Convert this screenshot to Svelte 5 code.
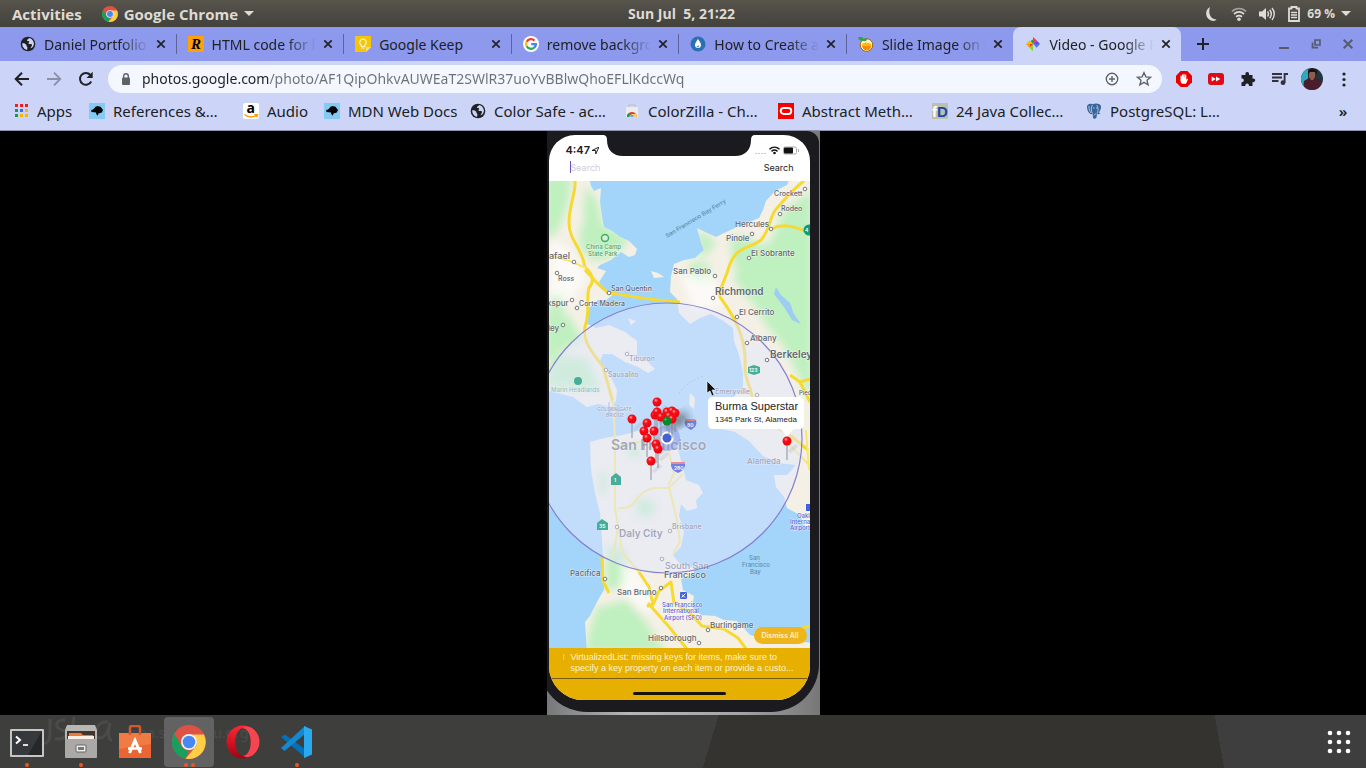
<script>
  const tabs = [
    { icon: 'globe', title: 'Daniel Portfolio' },
    { icon: 'rletter', title: 'HTML code for b' },
    { icon: 'keep', title: 'Google Keep' },
    { icon: 'google', title: 'remove backgro' },
    { icon: 'drop', title: 'How to Create a' },
    { icon: 'orange', title: 'Slide Image on H' },
    { icon: 'photos', title: 'Video - Google P', active: true }
  ];
  const bookmarks = [
    { icon: 'apps', title: 'Apps', w: 76 },
    { icon: 'mdn', title: 'References &…', w: 154 },
    { icon: 'amazon', title: 'Audio', w: 81 },
    { icon: 'mdn', title: 'MDN Web Docs', w: 146 },
    { icon: 'globe', title: 'Color Safe - ac…', w: 154 },
    { icon: 'store', title: 'ColorZilla - Ch…', w: 154 },
    { icon: 'oracle', title: 'Abstract Meth…', w: 154 },
    { icon: 'fd', title: '24 Java Collec…', w: 154 },
    { icon: 'pg', title: 'PostgreSQL: L…', w: 150 }
  ];
  const extensions = [
    ['adblock', 'Ad blocker'], ['ff', 'Video speed'], ['puzzle', 'Extensions'],
    ['playlist', 'Media control'], ['avatar', 'Profile'], ['dots', 'Menu']
  ];
  const dock = [
    { icon: 'terminal', label: 'Terminal', runs: 1 },
    { icon: 'files', label: 'Files', runs: 1 },
    { icon: 'software', label: 'Software', runs: 0 },
    { icon: 'chrome', label: 'Chrome', runs: 2, active: true },
    { icon: 'opera', label: 'Opera', runs: 0 },
    { icon: 'vscode', label: 'Code', runs: 1 }
  ];
  let url = $state('photos.google.com/photo/AF1QipOhkvAUWEaT2SWlR37uoYvBBlwQhoEFLlKdccWq');

  const insideTowns = [
    [629, 361, 'Tiburon', 7], [608, 377, 'Sausalito', 7], [551, 392, 'Marin Headlands', 6, 'g'],
    [715, 394, 'Emeryville', 7], [611, 450, 'San Francisco', 14, 'b'], [747, 464, 'Alameda', 8],
    [619, 537, 'Daly City', 10, 'b'], [672, 529, 'Brisbane', 7], [665, 569, 'South San', 9], [597, 411, 'GOLDEN GATE', 5], [606, 417, 'BRIDGE', 5]
  ];
  const towns = [
    [774, 196, 'Crockett', 7], [781, 211, 'Rodeo', 7], [735, 227, 'Hercules', 8], [726, 241, 'Pinole', 8],
    [751, 256, 'El Sobrante', 8], [673, 274, 'San Pablo', 8], [715, 295, 'Richmond', 10, 'b'], [739, 315, 'El Cerrito', 8],
    [750, 341, 'Albany', 8], [770, 358, 'Berkeley', 10, 'b'], [549, 259, 'afael', 9], [558, 281, 'Ross', 7],
    [611, 291, 'San Quentin', 7], [579, 306, 'Corte Madera', 7], [547, 306, 'kspur', 8], [548, 331, 'ley', 8],
    [586, 249, 'China Camp', 6, 'g'], [588, 256, 'State Park', 6, 'g'], [799, 395, 'Pied', 6],
    [570, 576, 'Pacifica', 8], [664, 578, 'Francisco', 9], [617, 595, 'San Bruno', 8], [648, 641, 'Hillsborough', 8],
    [710, 628, 'Burlingame', 8], [662, 607, 'San Francisco', 6, 'p'], [663, 613, 'International', 6, 'p'],
    [664, 620, 'Airport (SFO)', 6, 'p'], [749, 560, 'San', 6, 't'], [742, 567, 'Francisco', 6, 't'], [750, 574, 'Bay', 6, 't'],
    [797, 518, 'Oakl', 6, 'p'], [790, 524, 'Internat', 6, 'p'], [790, 530, 'Airport', 6, 'p']
  ];
  const insideDots = [[627, 354], [606, 370], [757, 395], [617, 527], [670, 531], [662, 559]];
  const dots = [
    [805, 189], [780, 214], [771, 229], [752, 234], [749, 258], [715, 276], [713, 298], [737, 317], [747, 343], [767, 360],
    [574, 262], [557, 273], [609, 293], [572, 300], [577, 308], [563, 325], [605, 579], [661, 588], [699, 643], [708, 630]
  ];
  const pins = [
    [657, 402], [632, 419], [655, 415], [657, 412], [667, 412], [672, 411], [675, 413], [661, 417],
    [669, 416], [672, 419], [647, 423], [644, 431], [654, 431], [647, 438], [656, 444], [658, 449], [651, 461], [787, 441]
  ];
</script>

{#snippet icon(name)}
  {#if name === 'globe'}
    <svg viewBox="0 0 16 16"><circle cx="8" cy="8" r="7.3" fill="#202124" /><path d="M2.200 7.200c1.500-.2 2.900.2 3.800 1.200.7.8.2 1.700 1.100 2.300.6.500.2 1.700-.1 3.200-2.800-.6-5-3.400-4.800-6.700zM9 1.900c-.1 1.200-1.300 1.100-1.900 1.900-.5.8.2 1.300 1.200 1.300 1.100 0 1.200 1 .4 1.700-.9.7.3 1.500 1.500 1.200 1.200-.4 2 .3 1.800 1.400-.2.900-1.300 1.300-1.300 2.900 2.400-1 3.600-3.200 3.100-5.600C13.200 4.100 11.400 2.400 9 1.900z" fill="#ccd5f8" /></svg>
  {:else if name === 'rletter'}
    <svg viewBox="0 0 16 16"><rect width="16" height="16" fill="#ff9f0c" /><text x="3" y="13" font-family="Liberation Serif" font-size="15" font-weight="bold" font-style="italic">R</text></svg>
  {:else if name === 'keep'}
    <svg viewBox="0 0 16 16"><path d="M0 0h16v11l-5 5H0z" fill="#f5c50a" /><path d="M16 11h-5v5z" fill="#ffe168" /><path d="M6.300 10.500V9.300a3.300 3.300 0 1 1 3.400 0v1.200zM6.500 12h3" fill="none" stroke="#fff6cf" stroke-width="1.200" /></svg>
  {:else if name === 'google'}
    <svg viewBox="0 0 16 16"><circle cx="8" cy="8" r="8" fill="#fff" /><g fill="none" stroke-width="2.300"><path d="M11.500 4.600A4.900 4.900 0 0 0 3.700 5.800" stroke="#ea4335" /><path d="M3.700 5.700a4.900 4.900 0 0 0 0 4.600" stroke="#fbbc05" /><path d="M3.700 10.200a4.900 4.900 0 0 0 7.500 1.400" stroke="#34a853" /><path d="M11.200 11.600a4.900 4.900 0 0 0 1.700-3.500H8.200" stroke="#4285f4" /></g></svg>
  {:else if name === 'drop'}
    <svg viewBox="0 0 16 16"><circle cx="8" cy="8" r="7.500" fill="#2c70b4" /><path d="M8 3c1.700 2.600 3 4.200 3 6a3 3 0 0 1-6 0c0-1.800 1.300-3.400 3-6z" fill="#fff" /><path d="M8.600 9.500a1.300 1.300 0 0 1-1.800 1.200" stroke="#2c70b4" fill="none" /></svg>
  {:else if name === 'orange'}
    <svg viewBox="0 0 16 16"><circle cx="8.500" cy="9" r="6.300" fill="#fff0c4" stroke="#a06718" /><path d="M4 8q4-3 9 0 1 6-4.500 6.500Q4 14 4 8z" fill="#ffb512" /><path d="M4.300 10h8.500q-.6 3.800-4.300 4.300Q5 13.800 4.300 10z" fill="#f68c00" /><path d="M0 1l4 0 2 2 4-1-2 3H5L1 4z" fill="#2fa440" /></svg>
  {:else if name === 'photos'}
    <svg viewBox="0 0 16 16"><path d="M8 8V1l3.600 3.200z" fill="#f04231" /><path d="M8 8l3.600-3.800L15 8z" fill="#8240e8" /><path d="M8 8h7l-3.500 3.800z" fill="#4778ec" /><path d="M8 8v7l-3.600-3.300z" fill="#7adb2b" /><path d="M8 8l3.500 3.800L8 12z" fill="#ccd5f8" /><path d="M8 8H1l3.500-3.700z" fill="#fbbc04" /><path d="M8 8l-3.600 3.700L1 8z" fill="#fb9d0a" /><path d="M8 8H5v3z" fill="#e5331f" /><path d="M8 8V3.500L5.500 5z" fill="#249b45" /></svg>
  {:else if name === 'apps'}
    <svg viewBox="0 0 16 16"><path d="M2 1h3v3H2z M7 1h3v3H7z M12 1h3v3h-3z" fill="#f01d19" /><path d="M2 6h3v3H2z M2 11h3v3H2z" fill="#159b51" /><path d="M7 6h3v3H7z" fill="#4169ee" /><path d="M12 6h3v3h-3z M7 11h3v3H7z M12 11h3v3h-3z" fill="#f7b500" /></svg>
  {:else if name === 'mdn'}
    <svg viewBox="0 0 16 16"><rect width="16" height="16" fill="#83cbf4" /><path d="M2 7.500l3-1.700 1.500-2 2-.8 3 .8L14 7l-1.200 2.500-3.300 1-.8 2.300-1.500-1.800-.2-1.500L2.500 9z" fill="#050505" /></svg>
  {:else if name === 'amazon'}
    <svg viewBox="0 0 16 16"><rect width="16" height="16" rx="2" fill="#fff" /><text x="3.500" y="10" font-family="Open Sans" font-size="14" font-weight="bold">a</text><path d="M1.500 11.500c3.800 3 8.500 3 12.500.4M11.500 11.700h2.800l-.7 2.300" stroke="#ff9900" stroke-width="1.500" fill="none" /></svg>
  {:else if name === 'store'}
    <svg viewBox="0 0 16 16"><path d="M5 4V2h6v2" stroke="#c8c8c8" stroke-width="1.500" fill="none" /><path d="M2 4h12v10H2z" fill="#ececec" /><path d="M3 14a5 5 0 0 1 10 0z" fill="#db4437" /><path d="M3 14c0-2 .7-3 1.500-3.700L8 14z" fill="#0f9d58" /><path d="M13 14a5 5 0 0 0-1-3H8v3z" fill="#ffcd40" /><path d="M5.700 14a2.300 2.300 0 0 1 4.600 0z" fill="#4285f4" stroke="#fff" stroke-width=".5" /></svg>
  {:else if name === 'oracle'}
    <svg viewBox="0 0 16 16"><rect width="16" height="16" fill="#f80000" /><rect x="2.700" y="5" width="10.600" height="6" rx="3" fill="none" stroke="#fff" stroke-width="1.900" /></svg>
  {:else if name === 'fd'}
    <svg viewBox="0 0 16 16"><rect width="16" height="16" fill="#bcc0ae" /><text x="0" y="13.500" font-family="Liberation Sans" font-size="15" font-weight="bold" fill="#fff">f</text><text x="5" y="13.500" font-family="Liberation Sans" font-size="15" font-weight="bold" fill="#2148a8">D</text></svg>
  {:else if name === 'pg'}
    <svg viewBox="0 0 16 16"><path d="M1 3.500C1.500.8 4.500.3 6.500 1.300 9 .2 14.500 0 15 3.500c.3 2.500-1.200 5-2.300 6.200l2 .4-1.800 1.200-2-.2c-.2 2.400.1 4.400-2.400 4.600C6.500 16 7 13 6.700 11l-1.700.2C2.500 10.500.8 6.500 1 3.500z" fill="#39659b" /><path d="M6.500 2C4.800 4 5 8 6.500 10.500M10.700 2.200c1.800 2.200 1.700 5.500.4 8.300M3 3c-.2 3 .6 5 2 7M7 5h1.500M10 5h1.500M8 12.500c.5-1.200 1-1.500 2.200-1.700" fill="none" stroke="#dbe6f7" stroke-width=".7" /></svg>
  {:else if name === 'back'}
    <svg viewBox="0 0 16 16"><path d="M15 8H2M8 1.700L1.700 8 8 14.300" fill="none" stroke="#202124" stroke-width="2" /></svg>
  {:else if name === 'forward'}
    <svg viewBox="0 0 16 16"><path d="M1 8h13M8 1.700L14.300 8 8 14.300" fill="none" stroke="#8b90a8" stroke-width="1.800" /></svg>
  {:else if name === 'reload'}
    <svg viewBox="0 0 16 16"><path d="M13.200 10.500A5.900 5.900 0 1 1 12.400 4" fill="none" stroke="#202124" stroke-width="2" /><path d="M14.700.8v6.200H8.500z" fill="#202124" /></svg>
  {:else if name === 'adblock'}
    <svg viewBox="0 0 16 16"><path d="M4.700 0h6.600L16 4.700v6.600L11.300 16H4.700L0 11.300V4.700z" fill="#e80000" /><path d="M4.500 9V5c0-.8 1-.8 1.100 0v2.600L6 3.700c.1-.7 1-.7 1.100 0v3.500l.4-4c.1-.7 1-.7 1.100 0l.1 4 .5-3.300c.2-.7 1-.6 1.100 0v5l.6-.9c.6-.6 1.300-.2 1 .5L10 12.700H6.200C5 12.200 4.500 10.700 4.500 9z" fill="#fff" /></svg>
  {:else if name === 'ff'}
    <svg viewBox="0 0 16 16"><rect y="2" width="16" height="12" rx="3" fill="#de0b17" /><path d="M3.700 5.500L7.800 8l-4.100 2.500zM8 5.500L12.300 8 8 10.500z" fill="#fff" /></svg>
  {:else if name === 'puzzle'}
    <svg viewBox="0 0 16 16"><path d="M1.500 4h4c-.4-1.700.3-3 1.700-3S9.400 2.300 9 4h3.500v3.500c1.500-.3 2.700.5 2.700 1.800s-1.200 2.100-2.700 1.800V15H9c.1-1.500-.7-2.400-1.900-2.400S5.200 13.500 5.300 15H1.500v-3.800c1.500.1 2.300-.7 2.300-1.900S3 7.400 1.500 7.500z" fill="#202124" /></svg>
  {:else if name === 'playlist'}
    <svg viewBox="0 0 16 16"><path d="M0 3h10M0 6.500h10M0 10h6.500" stroke="#30313a" stroke-width="1.800" /><path d="M16 3h-3.400v8.500" fill="none" stroke="#30313a" stroke-width="1.900" /><circle cx="11" cy="11.700" r="2.400" fill="#30313a" /></svg>
  {:else if name === 'avatar'}
    <svg class="avatar" viewBox="0 0 22 22"><defs><clipPath id="face"><circle cx="11" cy="11" r="11" /></clipPath></defs><g clip-path="url(#face)"><rect width="22" height="22" fill="#20353c" /><path d="M0 0h7v22H0z" fill="#32a8bd" /><path d="M2 22l1-9 5-3h7l5 4 1 8z" fill="#4b1d2b" /><path d="M8 4h6v5l-2 3h-2l-2-3z" fill="#8d5e4d" /><path d="M7 7V3l4-3 5 2v5l-2-3H9z" fill="#151417" /></g></svg>
  {:else if name === 'dots'}
    <svg viewBox="0 0 16 16"><circle cx="8" cy="3" r="1.600" fill="#202124" /><circle cx="8" cy="8.500" r="1.600" fill="#202124" /><circle cx="8" cy="14" r="1.600" fill="#202124" /></svg>
  {:else if name === 'chrome'}
    <svg viewBox="0 0 34 34"><circle cx="17" cy="17" r="17" fill="#de5145" /><path d="M2.300 8.500L9.600 21.300A8.500 8.500 0 0 0 17 25.500l-3.500 8.200A17 17 0 0 1 2.300 8.500z" fill="#17a05d" /><path d="M32 9.500a17 17 0 0 1-15 24.500l-3.500-.3L24.200 21c1.500-4 0-9-4-11.500z" fill="#ffce44" /><circle cx="17" cy="17" r="8" fill="#f3f3f3" /><circle cx="17" cy="17" r="6.300" fill="#4788f4" /></svg>
  {:else if name === 'terminal'}
    <svg viewBox="0 0 34 34"><rect x="0" y="4" width="34" height="28" rx="1" fill="#c4c5c4" /><rect x="2" y="6" width="30" height="24" fill="#252728" /><path d="M2 6h30L18 30H2z" fill="#45484a" opacity=".55" /><path d="M6 11.500l4 3.500-4 3.500" fill="none" stroke="#fff" stroke-width="2" /><path d="M13 20h5" stroke="#fff" stroke-width="1.700" /></svg>
  {:else if name === 'files'}
    <svg viewBox="0 0 34 34"><path d="M3 0h28l2 5v26c0 2-1 2-2 2H3c-1 0-2 0-2-2V5z" fill="#b7b7b6" /><path d="M3 6h28v8H3z" fill="#42352b" /><path d="M5 8h12l2 2h10v5H5z" fill="#ed7b37" /><path d="M4 11h26v3H4z" fill="#f8eee5" /><path d="M1 14h32v17c0 2-1 2-2 2H3c-2 0-2-1-2-2z" fill="#aaa9a7" /><rect x="12" y="20" width="10" height="7" rx="1" fill="#eee" stroke="#656461" /><rect x="14" y="22" width="6" height="3" fill="#777" /></svg>
  {:else if name === 'software'}
    <svg viewBox="0 0 34 34"><path d="M1 8h32v25H1z" fill="#eb6534" /><path d="M1 8h32v11L1 24z" fill="#f17b45" /><path d="M12 10V3q0-2 2-2h6q2 0 2 2v7" fill="none" stroke="#d7572c" stroke-width="2.500" /><path d="M11.500 28L17 15.500 22.500 28" fill="none" stroke="#fff" stroke-width="3" /><path d="M10 23.500h14" stroke="#fff" stroke-width="2.500" /></svg>
  {:else if name === 'opera'}
    <svg viewBox="0 0 34 34"><defs><linearGradient id="op" x2="0" y2="1"><stop stop-color="#ff2638" /><stop offset="1" stop-color="#a8000d" /></linearGradient></defs><path fill-rule="evenodd" d="M17 .5a16.500 16.500 0 1 1 0 33 16.500 16.500 0 0 1 0-33zM17 3.200c-4.500 0-7.800 6-7.800 13.800S12.500 30.800 17 30.800 24.800 25 24.800 17 21.500 3.200 17 3.200z" fill="url(#op)" /><path d="M17 3.200c3-2.200 7-1.600 10.500 1A16.500 16.500 0 0 1 27 30c-3.300 2.400-7 3-10 .8 4.500 0 7.800-6 7.800-13.800S21.500 3.200 17 3.200z" fill="#f24750" /></svg>
  {:else if name === 'vscode'}
    <svg viewBox="0 0 34 34"><path d="M1 12l4-2.500L26 25v8z" fill="#0072bd" /><path d="M1 23l3.500 3L25 9V1z" fill="#1588cf" /><path d="M24 1l8 3.500v25L24 33z" fill="#2aa9ee" /></svg>
  {/if}
{/snippet}

{#snippet labels(list)}
  {#each list as [x, y, text, size, kind]}
    <text {x} {y} font-size={size} class="lbl {kind ?? ''}">{text}</text>
  {/each}
{/snippet}

<div class="desktop">
  <header class="topbar">
    <div class="side">
      <button class="plain">Activities</button>
      <button class="plain app"><span class="i16">{@render icon('chrome')}</span>Google Chrome<i class="caret"></i></button>
    </div>
    <time>Sun Jul&nbsp; 5, 21∶22</time>
    <div class="side status">
      <svg width="16" height="16" viewBox="0 0 16 16"><path d="M7 1C1 4 2 14 10 15c2 0 3-.8 3.500-1.500C7 13 5 7 7 1z" fill="#dedcd8" /></svg>
      <svg width="16" height="16" viewBox="0 0 16 16" fill="none" stroke-width="1.700"><path d="M1 5.500c4-4 10-4 14 0" stroke="#a3a19b" /><path d="M3 8c3-2.500 7-2.500 10 0M5 10.700c2-1.500 4-1.500 6 0" stroke="#dedcd8" /><circle cx="8" cy="13.300" r="1.800" fill="#dedcd8" /></svg>
      <svg width="16" height="16" viewBox="0 0 16 16"><path d="M0 5.500h3L7 2v12l-4-3.500H0z" fill="#dedcd8" /><path d="M8.500 5.500c1.200 1.500 1.200 3.500 0 5M10.700 3.800c2 2.600 2 5.800 0 8.400M13 2c3 3.500 3 8.500 0 12" fill="none" stroke="#dedcd8" stroke-width="1.400" /></svg>
      <svg width="14" height="16" viewBox="0 0 14 16"><path d="M2 2.500h2.500V1h5v1.500H12V15H2z" fill="none" stroke="#dedcd8" stroke-width="1.800" /><path d="M4 6.500h6M4 9h6M4 11.500h6" stroke="#dedcd8" stroke-width="1.300" /></svg>
      <span class="pct">69 %</span><i class="caret"></i>
    </div>
  </header>

  <nav class="tabstrip" aria-label="Tabs">
    <div class="tabs">
      {#each tabs as tab}
        <div class="tab" class:active={tab.active}>
          <span class="i16">{@render icon(tab.icon)}</span>
          <span class="title">{tab.title}</span>
          <button class="close" aria-label="Close tab"><svg width="10" height="10" viewBox="0 0 10 10"><path d="M1.300 1.300l7.400 7.400M8.700 1.300L1.300 8.700" stroke="#202124" stroke-width="1.700" /></svg></button>
        </div>
      {/each}
    </div>
    <button class="close new" aria-label="New tab"><svg width="12" height="12" viewBox="0 0 12 12"><path d="M6 0v12M0 6h12" stroke="#202124" stroke-width="2" /></svg></button>
    <div class="wins">
      <button class="close" aria-label="Minimise"><svg width="10" height="10" viewBox="0 0 10 10"><path d="M0 9h10" stroke="#575b6b" stroke-width="2" /></svg></button>
      <button class="close" aria-label="Restore"><svg width="10" height="10" viewBox="0 0 10 10"><path d="M4 1h5v5H4zM1.500 3.500v5.200H7" fill="none" stroke="#575b6b" stroke-width="1.700" /></svg></button>
      <button class="close" aria-label="Close window"><svg width="10" height="10" viewBox="0 0 10 10"><path d="M.7.7l8.600 8.600M9.300.7L.7 9.300" stroke="#575b6b" stroke-width="2" /></svg></button>
    </div>
  </nav>

  <div class="toolbar">
    <button class="tool" aria-label="Back">{@render icon('back')}</button>
    <button class="tool" aria-label="Forward">{@render icon('forward')}</button>
    <button class="tool" aria-label="Reload">{@render icon('reload')}</button>
    <div class="omnibox">
      <svg width="10" height="12" viewBox="0 0 10 12"><rect x="1" y="4.500" width="8" height="7.500" rx="1" fill="#5f6368" /><path d="M2.700 5V3a2.300 2.300 0 0 1 4.600 0v2" fill="none" stroke="#5f6368" stroke-width="1.400" /></svg>
      <input aria-label="Address" bind:value={url} spellcheck="false" />
      <button class="tool" aria-label="Zoom"><svg viewBox="0 0 16 16" fill="none" stroke="#5f6368" stroke-width="1.400"><circle cx="8" cy="8" r="5.700" /><path d="M8 5v6M5 8h6" /></svg></button>
      <button class="tool" aria-label="Bookmark"><svg viewBox="0 0 16 16"><path d="M8 1.700l1.900 4.200 4.600.4-3.500 3 1.100 4.500L8 11.400l-4.100 2.400L5 9.300l-3.500-3 4.600-.4z" fill="none" stroke="#5f6368" stroke-width="1.400" /></svg></button>
    </div>
    {#each extensions as [name, label]}
      <button class="tool" aria-label={label}>{@render icon(name)}</button>
    {/each}
  </div>

  <nav class="bookmarks" aria-label="Bookmarks">
    {#each bookmarks as b}
      <a href="#{b.icon}" style:width="{b.w}px"><span class="i16">{@render icon(b.icon)}</span>{b.title}</a>
    {/each}
    <button class="more" aria-label="More bookmarks">»</button>
  </nav>

  <main class="stage">
    <div class="frame">
      <div class="bezel">
        <div class="screen">
          <div class="phonestatus">
            <strong>4:47</strong>
            <svg width="7" height="7" viewBox="0 0 7 7"><path d="M0 3.500L7 0 3.700 7V3.500z" fill="none" stroke="#222" /></svg>
            <svg class="notch" width="152" height="21" viewBox="0 0 152 21"><path d="M0 0q4 0 4 5c0 10 6 16 16 16h112c10 0 16-6 16-16q0-5 4-5z" fill="#1b1a1e" /></svg>
            <svg class="signals" width="44" height="9" viewBox="0 0 44 9"><path d="M0 7.500h11" stroke="#ccc" stroke-dasharray="2 1" /><path d="M14.500 3.300c3-2.700 7-2.700 10 0M16.500 5.300c2-1.600 4-1.600 6 0" fill="none" stroke="#111" stroke-width="1.500" /><circle cx="19.500" cy="7" r="1.300" fill="#111" /><rect x="28.500" y="1" width="13" height="7" rx="1.500" fill="none" stroke="#aaa" /><rect x="29" y="1.500" width="9" height="6" rx="1" fill="#111" /><path d="M43.500 3v3" stroke="#aaa" /></svg>
          </div>
          <div class="searchrow">
            <input aria-label="Search places" placeholder="Search" />
            <button>Search</button>
          </div>
          <div class="mapbox">
            <svg class="map" viewBox="549 181 261 467" role="img" aria-label="Map of the San Francisco Bay Area">
              <defs>
                <filter id="soft" x="-20%" y="-20%" width="140%" height="140%"><feGaussianBlur stdDeviation="4" /></filter>
                <filter id="edge"><feGaussianBlur stdDeviation=".5" /></filter>
                <radialGradient id="pin" cx=".38" cy=".32" r=".7"><stop stop-color="#ffb5b9" /><stop offset=".3" stop-color="#fb1018" /><stop offset="1" stop-color="#e80010" /></radialGradient>
                <clipPath id="land"><path id="coast" d="M545 178L589 178 591 186 594 191 601 188 600 202 602 217 604 227 612 231 620 237 629 241 637 249 635 255 629 257 621 252 611 260 600 265 597 268 606 271 599 282 603 289 614 294 606 300 598 300 589 308 585 323 596 328 609 325 625 332 637 341 637 356 648 362 655 369 648 373 638 367 625 362 612 354 603 354 600 361 606 370 612 379 617 390 616 401 611 407 598 404 587 407 573 397 558 393 545 390z M590 442L605 438 623 435 638 431 653 429 668 431 676 441 680 457 683 467 686 480 699 485 703 493 696 500 697 508 687 511 681 504 679 516 684 532 681 547 673 555 680 564 695 568 693 575 681 579 683 590 694 596 692 607 701 615 715 616 724 620 737 621 750 635 765 639 815 643 815 652 587 652 586 637 585 622 590 616 598 600 604 590 604 568 602 540 600 513 595 493 591 470z M790 178L787 185 775 191 766 201 763 210 759 218 747 223 737 227 724 233 716 237 705 232 697 228 701 242 704 250 695 258 684 260 674 264 671 276 670 292 677 299 679 313 686 320 690 324 700 318 711 314 722 320 733 328 734 341 739 355 743 372 743 388 730 400 714 412 714 427 735 432 749 441 763 456 778 463 796 465 787 475 774 475 776 487 784 497 787 508 800 515 804 525 815 530 815 178z M651 271l7 2 6 4-10 1z M690 393l5 5-1 11-5-4z M628 318l8 3-5 4z" /></clipPath>
              </defs>
              <rect x="549" y="181" width="261" height="467" fill="#a3d5fa" />
              <use href="#coast" fill="#f5f0e6" filter="url(#edge)" />
              <g clip-path="url(#land)">
                <g fill="#bff0bf" filter="url(#soft)">
                  <path d="M545 175h27l-4 30-10 26-13 10zM585 185l12 15 6 30-20 1zM580 228l22-5 28 17-18 18-19 3-13-13z" />
                  <path d="M545 308l24 8 14 24-38 20zM552 355l35 3 14 32-56-2zM555 291l10 2-3 24-11-6z" />
                  <path d="M607 545l18 3 2 35-22 8zM596 608l30-8 20 22 20 30h-82z" />
                  <path d="M812 190v215l-16-34-14-27-17-20-17-31-15-14 11-24 27-14 13-31zM697 228l20 15-17 18z" />
                  <path d="M730 235l26 5 5 18-28 10zM733 274l35 4 12 38-35-19zM690 262l20 2-3 20-18-6zM628 445l14 1-3 12-12-2zM636 498l20 4-4 16-15-2zM600 470l8 5-2 20-8-3z" />
                </g>
                <path d="M776 287l5 8 9 8 4 11 7 10-9-4-8-13-10-13z" fill="#9dcef2" />
                <g fill="#fff" opacity=".65" filter="url(#soft)"><path d="M550 240l18 8 19 28-18 30-20-11zM680 274l30-3 15 33-31 9zM620 560l20 15 20 28-15 9-24-22z" /></g>
              </g>
              <g fill="none" stroke-linejoin="round" filter="url(#edge)">
                <g stroke="#f6da30" stroke-width="3">
                  <path d="M575 181c1 12-6 24-6 42 0 17 13 25 16 44 9 8 9 15 4 21-3 10 1 20-3 35-6 17 7 30 17 44l10 35" />
                  <path d="M585 270l14 15 9 8c16 1 35 7 72 9M804 181c-10 7-18 17-27 27-8 8-6 21-16 32-13 10-26 5-33 30-5 15-9 19-8 27 11 15 27 38 25 70 0 15 8 23 7 32M771 229c12-6 23-3 38 4" />
                  <path d="M602 558l1 23 6 12M639 572l10 15 4 17-5 2 5-1 6-14 12-9 3 21 14 8 14 15 22 3 14 9 18 24M648 603l22 25 17 21M783 640c2-9 12-10 27-14M747 412l28 14 16 10 17 14M790 375l10 7 10-3M800 382l10 20" />
                </g>
                <g stroke="#f4e96e" stroke-width="2">
                  <path d="M613 400l2 37v70l3 20-5 30M615 447l42-9 10 10M618 508c23 2 15-19 39-20h12l14-14M669 487l8 33 3 22-7 12M668 448l6 25-6 13M619 527l3 25 17 20M545 254l25 7 16 7M785 440l24 25M806 430l3 40" />
                </g>
                <path d="M666 236l58-35" stroke="#70a8cd" stroke-dasharray="1 2" />
                <path d="M679 394c5-9 15-15 25-18" stroke="#7ba9cd" stroke-dasharray="2 2" />
              </g>
              {@render labels(insideTowns)}
              <g fill="#fff" stroke="#777">{#each insideDots as [x, y]}<circle cx={x} cy={y} r="1.800" />{/each}</g>
              <path d="M609 402v12M618 405v7M608 410h14" stroke="#919daf" />
              <circle cx="667" cy="438" r="135" fill="#e1e6fd" fill-opacity=".5" stroke="#8580cc" stroke-width="1.200" />
              <g fill="#46ae98"><circle cx="578" cy="381" r="4" /><path d="M748 367l6-2 6 2v6l-6 2-6-2zM611 477l5-4 5 4v8h-10zM597 523l5-4 6 4v7h-11z" /></g>
              <g fill="#7182de"><path d="M685 420h11q2 6-5 10-8-4-6-10zM671 463h14q1 7-7 10-8-3-7-10z" /><path d="M685 419h10v2h-10zM671 462h14v2h-14z" fill="#e88c96" /></g>
              <text x="674" y="470" class="shield">280</text><text x="687" y="427" class="shield">80</text><text x="749" y="372" class="shield">123</text><text x="614" y="482" class="shield">1</text><text x="599" y="528" class="shield">35</text>
              {@render labels(towns)}
              <text class="lbl t" font-size="6" transform="translate(667 238) rotate(-31)">San Francisco Bay Ferry</text>
              <g fill="#fff" stroke="#777">{#each dots as [x, y]}<circle cx={x} cy={y} r="1.800" />{/each}</g>
              <circle cx="605" cy="238" r="3.500" fill="#d3f2d5" stroke="#48ab66" stroke-width="1.500" />
              <circle cx="809" cy="230" r="5.500" fill="#119c78" /><text x="805" y="232" class="shield">4</text>
              <rect x="680" y="592" width="7" height="7" rx="1" fill="#4360df" /><path d="M681.500 597.500l4-4M682 594.500l3 3" stroke="#fff" /><rect x="806" y="504" width="6" height="7" fill="#4360df" />
              <ellipse cx="678" cy="420" rx="12" ry="7" fill="#354142" opacity=".5" filter="url(#soft)" transform="rotate(-25 678 420)" />
              <circle cx="667" cy="438" r="13" fill="#778ae5" opacity=".45" /><circle cx="667" cy="438" r="5.500" fill="#4360d5" stroke="#fff" stroke-width="2" />
              <g>{#each pins as [x, y]}<path d="M{x} {y + 4}v15" stroke="#8b8f94" /><path d="M{x + 2} {y + 11}l8-7" stroke="#777f83" stroke-width="4" opacity=".13" />{/each}</g>
              {#each pins as [x, y]}<circle cx={x} cy={y} r="4.500" fill="url(#pin)" />{/each}
              <circle cx="667" cy="421" r="4.500" fill="#06882b" /><circle cx="665.500" cy="419.500" r="1" fill="#6bbf77" />
              <path d="M713 397h86q5 0 5 5v22q0 5-5 5h-4c-4 0-5 7-8 7s-4-7-8-7h-66q-5 0-5-5v-22q0-5 5-5z" fill="#fff" />
              <text x="715" y="410" class="ctitle">Burma Superstar</text><text x="715" y="422" class="caddr">1345 Park St, Alameda</text>
              <path d="M707 381v12l3-2 2 5 2-1-2-5h4z" fill="#111" stroke="#fff" stroke-width=".6" />
            </svg>
            <button class="dismiss">Dismiss All</button>
          </div>
          <div class="warning"><span class="warn">!</span><p>VirtualizedList: missing keys for items, make sure to<br />specify a key property on each item or provide a custo...</p></div>
          <div class="home"><i></i></div>
        </div>
      </div>
    </div>
  </main>

  <footer class="dock">
    <div class="watermark">
      <svg width="76" height="34" viewBox="0 0 76 34"><path d="M8 4v16q-1 10-8 8M23 5c-10 0-11 8-3 10 8 3 3 10-7 9M32 2l-3 23c5-14 13-14 11 0M66 7c-12-2-17 16-8 16 7 0 10-15 10-15-2 8-2 16 2 18" fill="none" stroke="currentColor" stroke-width="3" /></svg>
      <span>isha.sadhguru.org</span>
    </div>
    {#each dock as d}
      <button class="dockitem" class:current={d.active} aria-label={d.label}>
        {@render icon(d.icon)}
        <span class="runs">{#each Array(d.runs) as _}<i></i>{/each}</span>
      </button>
    {/each}
    <button class="grid" aria-label="Show applications"><svg width="24" height="24" viewBox="0 0 24 24" fill="#fff">{#each [3, 12, 21] as y}{#each [3, 12, 21] as x}<circle cx={x} cy={y} r="2.300" />{/each}{/each}</svg></button>
  </footer>
</div>

<style>
  :global(body) { margin: 0; background: #000; }
  * { box-sizing: border-box; }
  .desktop { min-height: 100vh; display: flex; flex-direction: column; font-family: "Noto Sans", "Open Sans", sans-serif; font-size: 14px; color: #202124; overflow: hidden; }
  button { border: 0; padding: 0; margin: 0; background: none; font: inherit; color: inherit; display: flex; align-items: center; justify-content: center; }
  svg { display: block; flex: none; }
  .i16 { width: 16px; height: 16px; flex: none; }
  .i16 :global(svg) { width: 16px; height: 16px; }

  .topbar { height: 27px; display: flex; align-items: center; background: linear-gradient(#57544c, #42413c); color: #dfdbd2; font-weight: 700; font-family: "Open Sans", sans-serif; }
  .side { flex: 1; display: flex; align-items: center; gap: 20px; padding: 0 12px; }
  .app { gap: 6px; }
  .plain { font-size: 15px; white-space: nowrap; }
  .status { justify-content: flex-end; gap: 12px; padding-right: 15px; }
  .pct { font-size: 12px; margin: 0 -6px; }
  .caret { border: 5px solid transparent; border-top-color: #dfdbd2; border-bottom: 0; }

  .tabstrip { height: 34px; display: flex; background: #8d99ed; }
  .tabs { flex: 0 1 1181px; padding-left: 8px; display: flex; min-width: 0; }
  .tab { flex: 1; min-width: 0; display: flex; align-items: center; padding: 0 5px 0 12px; position: relative; }
  .tab:not(.active)::after { content: ""; position: absolute; right: -1px; top: 7px; height: 20px; width: 1px; background: #5b649c; }
  .tab:nth-last-child(2)::after { display: none; }
  .tab.active { background: #ccd5f8; border-radius: 8px 8px 0 0; }
  .title { flex: 1; margin-left: 8px; overflow: hidden; white-space: nowrap; mask-image: linear-gradient(90deg, #000 70%, transparent 98%); }
  .tab:nth-child(3) .title { mask-image: none; }
  .close { width: 20px; height: 34px; flex: none; }
  .new { margin-left: 12px; }
  .wins { margin-left: auto; display: flex; gap: 12px; padding-right: 8px; }

  .toolbar { height: 35px; padding: 0 6px; display: flex; align-items: center; background: #ccd5f8; }
  .tool { width: 32px; height: 28px; flex: none; }
  .tool :global(svg) { width: 16px; height: 16px; }
  .tool :global(svg.avatar) { width: 22px; height: 22px; }
  .omnibox { flex: 1; min-width: 0; height: 28px; margin: 0 6px; padding-left: 13px; border-radius: 14px; background: #f4f7fe; display: flex; align-items: center; }
  .omnibox input { flex: 1; min-width: 0; border: 0; outline: 0; padding: 0; margin-left: 11px; height: 28px; font: inherit; -webkit-text-fill-color: transparent; background: linear-gradient(90deg, #202124 127px, #6d7177 127px); background-clip: text; }
  .omnibox .tool:last-child { margin-right: 2px; }

  .bookmarks { height: 35px; padding: 0 8px 4px 13px; display: flex; align-items: center; background: #ccd5f8; border-bottom: 1px solid #8e93ae; font-size: 15px; }
  .bookmarks a { display: flex; align-items: center; gap: 8px; flex: none; color: inherit; text-decoration: none; white-space: nowrap; }
  .more { margin-left: auto; width: 30px; height: 28px; font-weight: 600; }

  .stage { flex: 1; background: #000; display: flex; justify-content: center; }
  .frame { width: 273px; background: linear-gradient(90deg, #77787a, #b7b7b9 30%, #a5a5a8 70%, #777); overflow: hidden; font-family: Inter, sans-serif; }
  .bezel { margin: 0 1px 3px -8px; padding: 4px 9px 12px 10px; border-radius: 0 12px 48px 48px; background: #1b1a1e; }
  .screen { border-radius: 26px 26px 34px 34px; overflow: hidden; background: #fff; }
  .phonestatus { height: 23px; padding: 7px 11px 0 17px; display: flex; align-items: center; position: relative; font-size: 11px; gap: 2px; line-height: 16px; }
  .phonestatus strong { font-weight: 600; }
  .notch { position: absolute; left: 54px; top: 0; }
  .signals { margin-left: auto; }
  .searchrow { height: 23px; padding: 0 16px 5px 21px; display: flex; align-items: center; font-size: 9px; }
  .searchrow input { flex: 1; min-width: 0; height: 12px; border: 0; border-left: 1px solid #7450bd; outline: 0; padding: 0; font: inherit; }
  .searchrow input::placeholder { color: #d2cbda; }
  .mapbox { position: relative; }
  .map { width: 100%; height: auto; }
  .lbl { fill: #62656d; paint-order: stroke; stroke: #fff; stroke-opacity: .6; stroke-width: 1px; font-weight: 500; }
  .lbl.b { font-weight: 600; fill: #646770; }
  .lbl.g { fill: #43a36a; }
  .lbl.p { fill: #5363d8; }
  .lbl.t { fill: #5a91ae; stroke: none; }
  .shield { font-size: 5px; fill: #fff; font-weight: 600; }
  .ctitle { font-size: 11px; fill: #222; font-family: "Liberation Sans", sans-serif; }
  .caddr { font-size: 8px; fill: #222; font-family: "Liberation Sans", sans-serif; }
  .dismiss { position: absolute; right: 3px; bottom: 4px; width: 53px; height: 17px; border-radius: 9px; background: #efb51c; color: #fff1c7; font-size: 7px; font-weight: 600; }
  .warning { height: 31px; display: flex; background: #e7b001; border-bottom: 1px solid #7b5b0d; color: #fff3c6; font-family: "Liberation Sans", sans-serif; font-size: 9px; line-height: 11px; padding: 4px 0 0 14px; }
  .warning p { margin: 0; white-space: nowrap; }
  .warn { width: 8px; opacity: .6; }
  .home { height: 21px; background: #e7b001; display: flex; justify-content: center; align-items: center; padding-top: 8px; }
  .home i { width: 93px; height: 3px; border-radius: 2px; background: #171309; }

  .dock { height: 53px; display: flex; align-items: center; position: relative; background: linear-gradient(100deg, #3e3f3d 52%, #34332f 52%); background: linear-gradient(80deg, transparent 89%, #3d3e3d 89%), linear-gradient(107deg, #3e3f3d 52%, #34332f 52%); }
  .dockitem { width: 50px; height: 50px; margin: 0 2px; border-radius: 4px; flex: none; position: relative; }
  .dockitem.current { background: #626262; }
  .dockitem :global(svg) { width: 34px; height: 34px; }
  .runs { position: absolute; left: 0; right: 0; bottom: 0; display: flex; justify-content: center; gap: 3px; }
  .runs i { width: 4px; height: 4px; border-radius: 2px; background: #ee5522; }
  .grid { margin-left: auto; width: 54px; height: 50px; }
  .watermark { position: absolute; left: 42px; top: 0; display: flex; align-items: center; gap: 10px; color: #4b4c4a; }
</style>
